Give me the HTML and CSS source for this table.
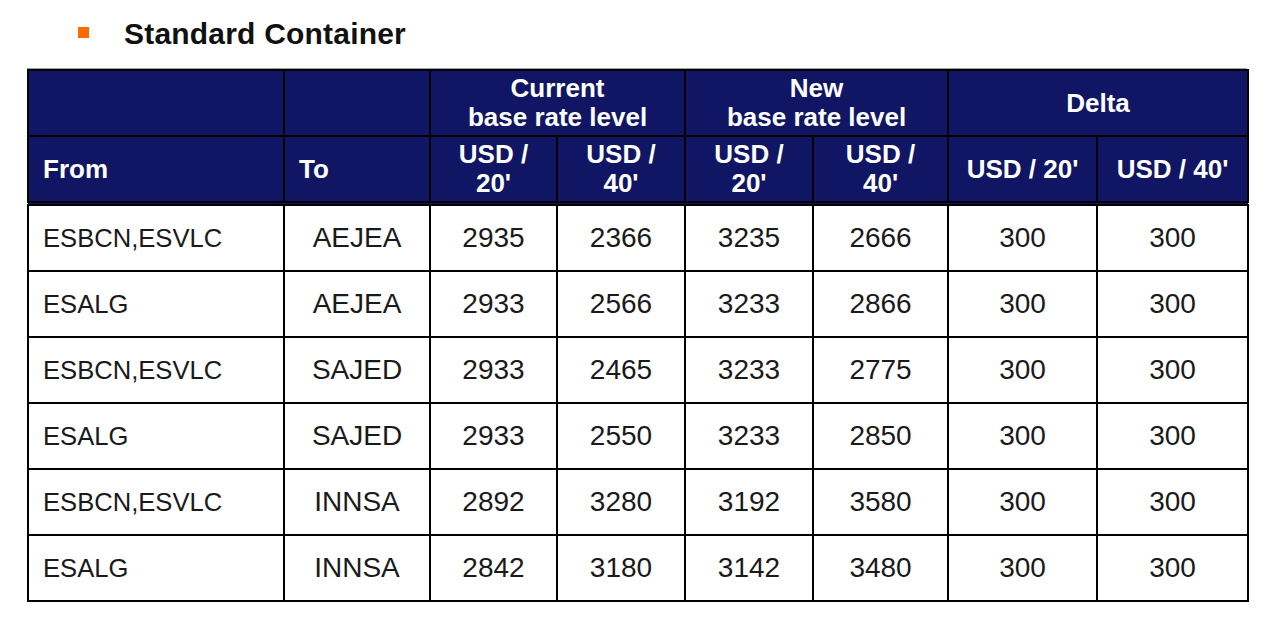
FILE: index.html
```html
<!DOCTYPE html>
<html>
<head>
<meta charset="utf-8">
<title>Standard Container</title>
<link rel="stylesheet" href="styles.css">
</head>
<body>
<div class="title">
  <span class="bullet"></span>
  <h1>Standard Container</h1>
</div>
<div class="wrap">
<table class="rates">
  <colgroup>
    <col class="c-from">
    <col class="c-to">
    <col class="c-127">
    <col class="c-128">
    <col class="c-128">
    <col class="c-135">
    <col class="c-149">
    <col class="c-151">
  </colgroup>
  <thead>
    <tr class="h-top">
      <th></th>
      <th></th>
      <th colspan="2">Current<br>base rate level</th>
      <th colspan="2">New<br>base rate level</th>
      <th colspan="2">Delta</th>
    </tr>
    <tr class="h-sub">
      <th class="left">From</th>
      <th class="left">To</th>
      <th>USD /<br>20'</th>
      <th>USD /<br>40'</th>
      <th>USD /<br>20'</th>
      <th>USD /<br>40'</th>
      <th>USD / 20'</th>
      <th>USD / 40'</th>
    </tr>
  </thead>
  <tbody>
    <tr><td class="from">ESBCN,ESVLC</td><td>AEJEA</td><td>2935</td><td>2366</td><td>3235</td><td>2666</td><td>300</td><td>300</td></tr>
    <tr><td class="from">ESALG</td><td>AEJEA</td><td>2933</td><td>2566</td><td>3233</td><td>2866</td><td>300</td><td>300</td></tr>
    <tr><td class="from">ESBCN,ESVLC</td><td>SAJED</td><td>2933</td><td>2465</td><td>3233</td><td>2775</td><td>300</td><td>300</td></tr>
    <tr><td class="from">ESALG</td><td>SAJED</td><td>2933</td><td>2550</td><td>3233</td><td>2850</td><td>300</td><td>300</td></tr>
    <tr><td class="from">ESBCN,ESVLC</td><td>INNSA</td><td>2892</td><td>3280</td><td>3192</td><td>3580</td><td>300</td><td>300</td></tr>
    <tr><td class="from">ESALG</td><td>INNSA</td><td>2842</td><td>3180</td><td>3142</td><td>3480</td><td>300</td><td>300</td></tr>
  </tbody>
</table>
</div>
</body>
</html>
```

FILE: styles.css
```css
html, body {
  margin: 0;
  padding: 0;
  background: #ffffff;
}

body {
  font-family: "Liberation Sans", Arial, sans-serif;
  color: #1a1a1a;
}

.title {
  display: flex;
  align-items: center;
  height: 68px;
  padding-left: 78px;
}

.bullet {
  width: 11px;
  height: 11px;
  background: #ff6a00;
  margin-right: 35px;
  margin-top: -3px;
}

.title h1 {
  margin: 0;
  font-size: 30px;
  font-weight: bold;
  letter-spacing: 0.2px;
  color: #111111;
}

.wrap {
  margin-left: 27px;
  width: 1220px;
  border-top: 1px solid #a0a0a0;
}

.rates {
  border-collapse: collapse;
  table-layout: fixed;
  width: 1220px;
}

.c-from { width: 256px; }
.c-to { width: 146px; }
.c-127 { width: 127px; }
.c-128 { width: 128px; }
.c-135 { width: 135px; }
.c-149 { width: 149px; }
.c-151 { width: 151px; }

.rates th,
.rates td {
  border: 2px solid #000000;
  padding: 0;
}

.rates thead th {
  background: #101664;
  color: #ffffff;
  font-size: 26px;
  line-height: 29px;
  font-weight: bold;
  text-align: center;
  height: 64px;
}

.rates thead th.left {
  text-align: left;
  padding-left: 14px;
}

.rates .h-sub th {
  border-bottom: 5px double #000000;
}

.rates tbody td {
  height: 64px;
  text-align: center;
  font-size: 28px;
  color: #1a1a1a;
}

.rates tbody td.from {
  text-align: left;
  padding-left: 14px;
  font-size: 25.6px;
}
```
